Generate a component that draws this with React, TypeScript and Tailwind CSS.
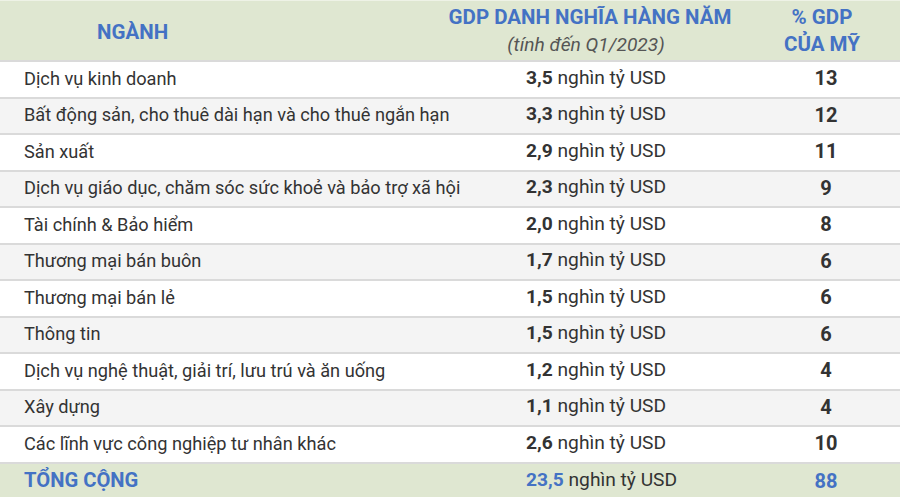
const rows: [string, string, string][] = [
  ['Dịch vụ kinh doanh', '3,5', '13'],
  ['Bất động sản, cho thuê dài hạn và cho thuê ngắn hạn', '3,3', '12'],
  ['Sản xuất', '2,9', '11'],
  ['Dịch vụ giáo dục, chăm sóc sức khoẻ và bảo trợ xã hội', '2,3', '9'],
  ['Tài chính & Bảo hiểm', '2,0', '8'],
  ['Thương mại bán buôn', '1,7', '6'],
  ['Thương mại bán lẻ', '1,5', '6'],
  ['Thông tin', '1,5', '6'],
  ['Dịch vụ nghệ thuật, giải trí, lưu trú và ăn uống', '1,2', '4'],
  ['Xây dựng', '1,1', '4'],
  ['Các lĩnh vực công nghiệp tư nhân khác', '2,6', '10'],
];

export default function App() {
  return (
    <div
      className="w-[900px] h-[497px] overflow-hidden bg-white text-[#333333] text-[18.2px]"
      style={{ fontFamily: 'Roboto, "Noto Sans", sans-serif' }}
    >
      {/* tiêu đề */}
      <div className="grid grid-cols-[440px_312px_148px] h-[60px] bg-[#dfe7d1] border-t border-[#eef2e6] text-[#4472c4] font-bold text-[20.5px] leading-[27px]">
        <div className="flex items-center pl-[97px] pt-1">NGÀNH</div>
        <div className="flex flex-col items-center justify-center pr-3">
          <span>GDP DANH NGHĨA HÀNG NĂM</span>
          <span className="italic font-normal text-[#555555] text-[19.2px] pr-2">(tính đến Q1/2023)</span>
        </div>
        <div className="flex flex-col items-center justify-center pr-2">
          <span>% GDP</span>
          <span>CỦA MỸ</span>
        </div>
      </div>

      {rows.map(([name, value, pct], i) => (
        <div
          key={name}
          className={`grid grid-cols-[440px_312px_148px] h-[36.5px] border-t-2 border-[#dadada] items-center ${
            i % 2 === 0 ? 'bg-white' : 'bg-[#f4f4f4]'
          }`}
        >
          <div className="pl-6 whitespace-nowrap pb-0.5">{name}</div>
          <div className="pl-[86px] whitespace-nowrap text-[19.2px] pb-0.5">
            <span className="font-bold">{value}</span> nghìn tỷ USD
          </div>
          <div className="text-center font-bold text-[20px] pb-0.5">{pct}</div>
        </div>
      ))}

      {/* tổng cộng */}
      <div className="grid grid-cols-[440px_312px_148px] h-[36px] border-t-2 border-[#dadada] bg-[#dfe7d1] items-center">
        <div className="pl-6 font-bold text-[#4472c4] text-[20.2px]">TỔNG CỘNG</div>
        <div className="pl-[86px] whitespace-nowrap text-[19.2px]">
          <span className="font-bold text-[#4472c4]">23,5</span> nghìn tỷ USD
        </div>
        <div className="text-center font-bold text-[#4472c4] text-[20px]">88</div>
      </div>
    </div>
  );
}
